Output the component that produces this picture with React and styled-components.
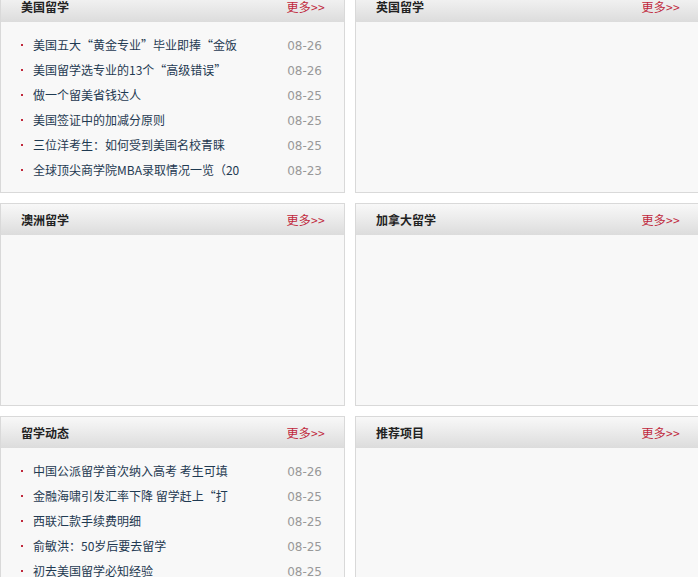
import React from 'react';
import styled, { createGlobalStyle } from 'styled-components';

const GlobalStyle = createGlobalStyle`
  html, body {
    margin: 0;
    padding: 0;
    background: #fff;
    overflow: hidden;
  }
  body {
    font-family: "Noto Sans CJK SC", "DejaVu Sans", sans-serif;
    font-size: 12px;
  }
`;

const Page = styled.div`
  display: grid;
  grid-template-columns: 345px 345px;
  column-gap: 10px;
  row-gap: 10px;
  width: 700px;
  margin-top: -10px;
`;

const Panel = styled.div`
  box-sizing: border-box;
  height: 203px;
  border: 1px solid #d9d9d9;
  background: #f8f8f8;
  display: flex;
  flex-direction: column;
`;

const Header = styled.div`
  height: 31px;
  flex: none;
  display: flex;
  align-items: center;
  justify-content: space-between;
  padding: 0 19px 1px 20px;
  box-sizing: border-box;
  background: linear-gradient(to bottom, #f8f8f8 0%, #ececec 45%, #dcdcdc 100%);
`;

const Title = styled.h3`
  margin: 0;
  font-size: 12px;
  font-weight: bold;
  color: #222;
`;

const More = styled.a`
  color: #c0283c;
  font-size: 12px;
  text-decoration: none;
  letter-spacing: 0.3px;
`;

const List = styled.ul`
  list-style: none;
  margin: 0;
  padding: 10px 22px 0 20px;
`;

const Item = styled.li`
  display: flex;
  align-items: baseline;
  height: 25px;
  line-height: 25px;
`;

const Dot = styled.span`
  align-self: center;
  width: 2px;
  height: 2px;
  background: #c0283c;
  margin-right: 10px;
  flex: none;
`;

const Link = styled.a`
  flex: 1;
  color: #1f3a52;
  text-decoration: none;
  white-space: nowrap;
  overflow: hidden;
`;

const Date = styled.span`
  color: #999;
  font-family: "DejaVu Sans", sans-serif;
  font-size: 12px;
  margin-left: 8px;
`;

const sections = [
  {
    title: '美国留学',
    items: [
      ['美国五大“黄金专业”毕业即捧“金饭', '08-26'],
      ['美国留学选专业的13个“高级错误”', '08-26'],
      ['做一个留美省钱达人', '08-25'],
      ['美国签证中的加减分原则', '08-25'],
      ['三位洋考生：如何受到美国名校青睐', '08-25'],
      ['全球顶尖商学院MBA录取情况一览（20', '08-23'],
    ],
  },
  { title: '英国留学', items: [] },
  { title: '澳洲留学', items: [] },
  { title: '加拿大留学', items: [] },
  {
    title: '留学动态',
    items: [
      ['中国公派留学首次纳入高考 考生可填', '08-26'],
      ['金融海啸引发汇率下降 留学赶上“打', '08-25'],
      ['西联汇款手续费明细', '08-25'],
      ['俞敏洪：50岁后要去留学', '08-25'],
      ['初去美国留学必知经验', '08-25'],
    ],
  },
  { title: '推荐项目', items: [] },
];

const App = () => {
  return (
    <>
      <GlobalStyle />
      <Page>
        {sections.map((s) => (
          <Panel key={s.title}>
            <Header>
              <Title>{s.title}</Title>
              <More href="#">更多&gt;&gt;</More>
            </Header>
            <List>
              {s.items.map(([text, date]) => (
                <Item key={text}>
                  <Dot />
                  <Link href="#">{text}</Link>
                  <Date>{date}</Date>
                </Item>
              ))}
            </List>
          </Panel>
        ))}
      </Page>
    </>
  );
};

export default App;
